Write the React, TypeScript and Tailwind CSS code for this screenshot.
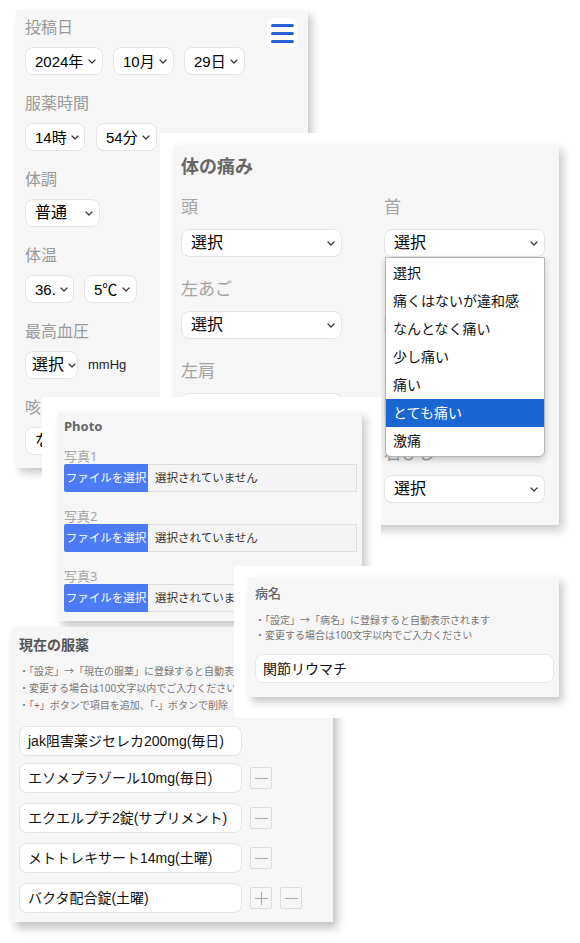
import React from "react";

const FONT = "font-['Liberation_Sans','Noto_Sans_CJK_JP',sans-serif]";
const JP = "font-['Noto_Sans','Noto_Sans_CJK_JP',sans-serif]";

function Chevron() {
  return (
    <svg width="8" height="5" viewBox="0 0 8 5" className="shrink-0">
      <path d="M1 1l3 3 3-3" fill="none" stroke="#333" strokeWidth="1.2" strokeLinecap="round" strokeLinejoin="round" />
    </svg>
  );
}

function Select({ label, className }: { label: string; className: string }) {
  return (
    <div
      className={`flex h-[28px] items-center justify-between gap-[4px] rounded-lg border border-[#e4e4e4] bg-white pl-[9px] pr-[6px] leading-none text-black ${className}`}
    >
      <span className="whitespace-nowrap">{label}</span>
      <Chevron />
    </div>
  );
}

function Group({ label, children }: { label: string; children: React.ReactNode }) {
  return (
    <div className="mb-[17px]">
      <div className="mb-[7px] h-[24px] text-[16px] leading-[24px] text-[#9a9a9a]">{label}</div>
      <div className="flex items-center gap-[10px]">{children}</div>
    </div>
  );
}

function LeftCard() {
  return (
    <div className={`absolute left-[16px] top-[10px] h-[458px] w-[292px] overflow-hidden bg-[#f6f6f6] pl-[9px] pt-[6px] shadow-[4px_5px_8px_rgba(0,0,0,0.22)] ${FONT}`}>
      <div className="absolute right-[11px] top-[8px] flex h-[30px] w-[30px] flex-col items-center justify-center gap-[5px] rounded-md bg-white">
        <span className="h-[3px] w-[23px] rounded-full bg-[#2b5fd6]" />
        <span className="h-[3px] w-[23px] rounded-full bg-[#2b5fd6]" />
        <span className="h-[3px] w-[23px] rounded-full bg-[#2b5fd6]" />
      </div>
      <Group label="投稿日">
        <Select label="2024年" className="w-[78px] text-[15px]" />
        <Select label="10月" className="w-[61px] text-[15px]" />
        <Select label="29日" className="w-[61px] text-[15px]" />
      </Group>
      <Group label="服薬時間">
        <Select label="14時" className="w-[60px] text-[15px]" />
        <Select label="54分" className="ml-[1px] w-[61px] text-[15px]" />
      </Group>
      <Group label="体調">
        <Select label="普通" className="w-[75px] text-[16px]" />
      </Group>
      <Group label="体温">
        <Select label="36." className="w-[49px] text-[15px]" />
        <Select label="5℃" className="w-[53px] text-[15px]" />
      </Group>
      <Group label="最高血圧">
        <Select label="選択" className="w-[53px] !pl-[6px] text-[16px]" />
        <span className="text-[13px] text-[#222]">mmHg</span>
      </Group>
      <Group label="咳">
        <Select label="なし" className="w-[75px] text-[16px]" />
      </Group>
    </div>
  );
}

function PainField({ label }: { label: string }) {
  return (
    <div className="mb-[20px]">
      <div className="mb-[8px] h-[26px] text-[17px] leading-[26px] text-[#a3a3a3]">{label}</div>
      <Select label="選択" className="w-[161px] text-[16px]" />
    </div>
  );
}

const OPTIONS = ["選択", "痛くはないが違和感", "なんとなく痛い", "少し痛い", "痛い", "とても痛い", "激痛"];

function PainCard() {
  return (
    <div className="absolute left-[160px] top-[133px] h-[410px] w-[420px] bg-white">
      <div className={`relative ml-[14px] mt-[12px] h-[380px] w-[385px] bg-[#f6f6f6] pl-[7px] pt-[9px] shadow-[4px_5px_9px_rgba(0,0,0,0.22)] ${FONT}`}>
        <div className="mb-[15px] h-[26px] text-[18px] font-bold leading-[26px] text-[#666]">体の痛み</div>
        <div className="grid grid-cols-[161px_161px] gap-x-[42px]">
          <div>
            <PainField label="頭" />
            <PainField label="左あご" />
            <PainField label="左肩" />
            <PainField label="左ひじ" />
          </div>
          <div>
            <PainField label="首" />
            <PainField label="右あご" />
            <PainField label="右肩" />
            <PainField label="右ひじ" />
          </div>
        </div>
        <div className="absolute left-[211px] top-[112px] w-[160px] overflow-hidden rounded-b-md border border-[#b5b5b5] bg-white py-px shadow-[0_3px_6px_rgba(0,0,0,0.2)]">
          {OPTIONS.map((o) => (
            <div
              key={o}
              className={`h-[28px] px-[7px] text-[14px] leading-[28px] ${o === "とても痛い" ? "bg-[#1a66d2] text-white" : "text-[#111]"}`}
            >
              {o}
            </div>
          ))}
        </div>
      </div>
    </div>
  );
}

function FileRow({ label }: { label: string }) {
  return (
    <div className="mb-[16px]">
      <div className="h-[16px] text-[13px] leading-[16px] text-[#a5a5a5]">{label}</div>
      <div className="flex h-[28px] w-[293px]">
        <div className="flex w-[84px] items-center justify-center rounded-l-[2px] bg-[#4d7bf6] text-[11.5px] text-white">ファイルを選択</div>
        <div className="flex flex-1 items-center border border-l-0 border-[#dedede] bg-[#f4f4f4] pl-[7px] text-[11.5px] text-[#333]">
          選択されていません
        </div>
      </div>
    </div>
  );
}

function PhotoCard() {
  return (
    <div className="absolute left-[42px] top-[397px] h-[224px] w-[339px] bg-white">
      <div className={`ml-[16px] mt-[15px] h-[209px] w-[304px] bg-[#f6f6f6] pl-[6px] pt-[5px] shadow-[4px_5px_8px_rgba(0,0,0,0.22)] ${JP}`}>
        <div className="mb-[13px] h-[18px] text-[13px] font-bold leading-[18px] text-[#666]">Photo</div>
        <FileRow label="写真1" />
        <FileRow label="写真2" />
        <FileRow label="写真3" />
      </div>
    </div>
  );
}

function DiseaseCard() {
  return (
    <div className="absolute left-[234px] top-[566px] h-[152px] w-[346px] bg-white">
      <div className={`ml-[14px] mt-[11px] h-[120px] w-[311px] bg-[#f6f6f6] pl-[7px] pt-[7px] shadow-[4px_5px_8px_rgba(0,0,0,0.22)] ${JP}`}>
        <div className="h-[18px] text-[13px] font-medium leading-[18px] text-[#666]">病名</div>
        <div className="mt-[11px] text-[10px] leading-[15px] text-[#777]">
          <div>・「設定」→「病名」に登録すると自動表示されます</div>
          <div>・変更する場合は100文字以内でご入力ください</div>
        </div>
        <div className="mt-[11px] flex h-[29px] w-[299px] items-center rounded-lg border border-[#e6e6e6] bg-white pl-[7px] text-[14px] text-[#111]">
          関節リウマチ
        </div>
      </div>
    </div>
  );
}

function SquareButton({ plus }: { plus?: boolean }) {
  return (
    <div className="relative h-[22px] w-[22px] rounded-[2px] border border-[#dcdcdc] bg-[#f6f6f6]">
      <span className="absolute left-[4px] top-[10px] h-px w-[13px] bg-[#aaa]" />
      {plus && <span className="absolute left-[10px] top-[4px] h-[13px] w-px bg-[#aaa]" />}
    </div>
  );
}

const MEDS: { name: string; buttons: ("plus" | "minus")[]; mt: string }[] = [
  { name: "jak阻害薬ジセレカ200mg(毎日)", buttons: [], mt: "mt-[12px]" },
  { name: "エソメプラゾール10mg(毎日)", buttons: ["minus"], mt: "mt-[7px]" },
  { name: "エクエルプチ2錠(サプリメント)", buttons: ["minus"], mt: "mt-[10px]" },
  { name: "メトトレキサート14mg(土曜)", buttons: ["minus"], mt: "mt-[10px]" },
  { name: "バクタ配合錠(土曜)", buttons: ["plus", "minus"], mt: "mt-[10px]" },
];

function MedsCard() {
  return (
    <div className="absolute left-0 top-[617px] h-[326px] w-[345px]">
      <div className={`ml-[12px] mt-[10px] h-[295px] w-[321px] bg-[#f6f6f6] pl-[7px] pt-[8px] shadow-[4px_6px_9px_rgba(0,0,0,0.25)] ${JP}`}>
        <div className="h-[20px] text-[14px] font-bold leading-[20px] text-[#555]">現在の服薬</div>
        <div className="mt-[8px] whitespace-nowrap text-[10px] leading-[17px] text-[#777]">
          <div>・「設定」→「現在の服薬」に登録すると自動表示されます</div>
          <div>・変更する場合は100文字以内でご入力ください</div>
          <div>・「+」ボタンで項目を追加、「-」ボタンで削除</div>
        </div>
        {MEDS.map((m) => (
          <div key={m.name} className={`flex items-center gap-[8px] ${m.mt}`}>
            <div className={`flex h-[30px] w-[223px] items-center rounded-lg border border-[#e4e4e4] bg-white pl-[8px] text-[14px] text-[#111] ${FONT}`}>
              {m.name}
            </div>
            {m.buttons.map((b, i) => (
              <SquareButton key={i} plus={b === "plus"} />
            ))}
          </div>
        ))}
      </div>
    </div>
  );
}

export default function App() {
  return (
    <div className="relative h-[943px] w-[580px] overflow-hidden bg-white">
      <LeftCard />
      <PainCard />
      <PhotoCard />
      <MedsCard />
      <DiseaseCard />
    </div>
  );
}
